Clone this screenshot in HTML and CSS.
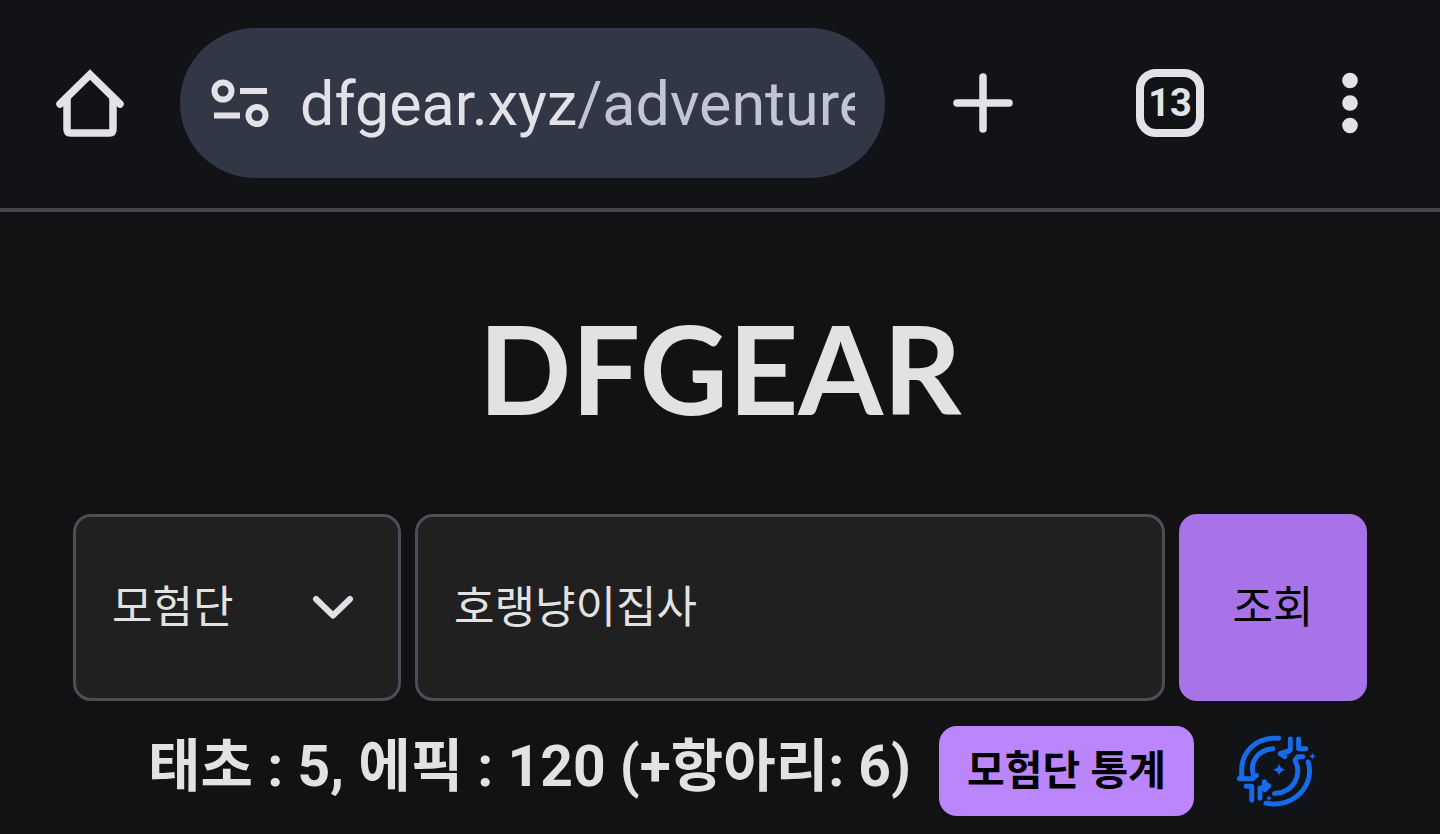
FILE: index.html
```
<!DOCTYPE html>
<html lang="ko">
<head>
    <meta charset="UTF-8">
    <title>DFGEAR</title>
    <meta name="viewport" content="width=device-width, initial-scale=1.0">
    <link rel="stylesheet" href="styles.css">
</head>
<body>
    <!-- Browser bar -->
    <header class="toolbar">
        <button class="tool-button" aria-label="Home">
            <svg width="72" height="72" viewBox="0 0 72 72" fill="none" stroke="currentColor" stroke-width="7.5" stroke-linecap="round" stroke-linejoin="round">
                <path d="M6 37 36 7.500 66 37" stroke-linejoin="miter"/>
                <path d="M13 31V62Q13 66 16.500 66H55.500Q59 66 59 62V31"/>
            </svg>
        </button>
        <div class="address-bar">
            <button class="site-info" aria-label="Site information">
                <svg width="60" height="52" viewBox="0 0 60 52" fill="none" stroke="currentColor" stroke-width="6">
                    <circle cx="13" cy="14" r="8.500"/>
                    <path d="M30 14H57M4 38.500H30"/>
                    <circle cx="47" cy="38.500" r="8.500"/>
                </svg>
            </button>
            <a class="url" href="#">dfgear.xyz<span class="url-path">/adventure</span></a>
        </div>
        <button class="tool-button" aria-label="New tab">
            <svg width="60" height="60" viewBox="0 0 60 60" fill="none" stroke="currentColor" stroke-width="7.5" stroke-linecap="round">
                <path d="M30 4V56M4 30H56"/>
            </svg>
        </button>
        <button class="tool-button" aria-label="Tabs">
            <span class="tab-count">13</span>
        </button>
        <button class="tool-button" aria-label="Menu">
            <svg width="16" height="62" viewBox="0 0 16 62" fill="currentColor">
                <circle cx="8" cy="8.500" r="7.800"/>
                <circle cx="8" cy="31" r="7.800"/>
                <circle cx="8" cy="53.500" r="7.800"/>
            </svg>
        </button>
    </header>

    <!-- Main Content -->
    <main>
        <h1 class="logo">DFGEAR</h1>

        <form class="search">
            <div class="select-box">
                <select class="field" aria-label="검색 유형">
                    <option>모험단</option>
                </select>
                <svg class="chevron" width="42" height="26" viewBox="0 0 42 26" fill="none" stroke="currentColor" stroke-width="6" stroke-linecap="round" stroke-linejoin="round">
                    <path d="M4 4 21 20.500 38 4"/>
                </svg>
            </div>
            <input class="field" type="text" value="호랭냥이집사" aria-label="모험단 이름">
            <button class="search-button" type="button">조회</button>
        </form>

        <section class="summary">
            <h2>태초 : 5, 에픽 : 120 (+항아리: 6)</h2>
            <button class="stats-button">모험단 통계</button>
            <button class="emblem" aria-label="갱신">
                <svg width="92" height="92" viewBox="33 30 279 279" fill="none" stroke="currentColor" stroke-width="15" stroke-linecap="round" stroke-linejoin="round">
                    <path d="M181 70C112 66 62 112 69 183L61 193H102L113 183"/>
                    <path d="M163 102C119 106 92 140 104 181"/>
                    <path d="M270 142C292 211 226 285 142 267"/>
                    <path d="M254 126H239L230 137C253 181 226 235 168 238"/>
                    <path d="M216 72V106L208 112M209 109 185 117 199 126M241 72V102H263"/>
                    <path d="M82 216H99V258M124 252V221H137V202L145 214 151 214 139 226"/>
                    <g fill="currentColor" stroke="none">
                        <path d="M182 147Q185 163 201 166Q185 169 182 184Q179 169 163 166Q179 163 182 147Z"/>
                        <path d="M283 115 286 122 293 125 286 128 283 135 280 128 273 125 280 122Z"/>
                        <path d="M151 243 154 249 160 252 154 255 151 261 148 255 142 252 148 249Z"/>
                    </g>
                </svg>
            </button>
        </section>
    </main>
</body>
</html>
```
FILE: styles.css
```
:root {
    --color-bg: #121214;
    --color-toolbar: #111317;
    --color-pill: #323745;
    --color-icon: #e3e2e8;
    --color-text: #e2e2e2;
    --color-field: #202020;
    --color-border: #4b4f55;
    --color-purple: #a873e8;
    --color-purple-light: #bb86fc;
    --radius-base: 18px;
}

* {
    box-sizing: border-box;
}

body {
    margin: 0;
    background: var(--color-bg);
    color: var(--color-text);
    font-family: Roboto, "Noto Sans CJK KR", sans-serif;
}

button {
    border: 0;
    padding: 0;
    background: none;
    color: inherit;
    font-family: inherit;
}

svg {
    display: block;
}

/* Browser bar */
.toolbar {
    display: grid;
    grid-template-columns: 180px 1fr 195px 180px 180px;
    align-items: center;
    padding: 28px 0 30px;
    background: var(--color-toolbar);
    border-bottom: 4px solid #43464d;
    color: var(--color-icon);
}

.tool-button {
    display: flex;
    align-items: center;
    justify-content: center;
    height: 150px;
}

.address-bar {
    display: flex;
    align-items: center;
    gap: 30px;
    min-width: 0;
    height: 150px;
    padding: 0 30px;
    border-radius: 75px;
    background: var(--color-pill);
}

.url {
    flex: 1;
    overflow: hidden;
    padding-top: 2px;
    color: inherit;
    font-size: 61px;
    line-height: 80px;
    text-decoration: none;
    white-space: nowrap;
}

.url-path {
    color: #c3c5d2;
}

.tab-count {
    display: flex;
    align-items: center;
    justify-content: center;
    width: 68px;
    height: 68px;
    border: 8px solid;
    border-radius: 20px;
    font-size: 38px;
    font-weight: 700;
}

/* Main Content */
main {
    padding: 76px 73px 16px;
}

.logo {
    margin: 0 0 66px;
    font-family: Lato, sans-serif;
    font-size: 122px;
    font-weight: 700;
    line-height: 160px;
    text-align: center;
}

.search {
    display: grid;
    grid-template-columns: 328px 1fr 188px;
    gap: 14px;
    height: 187px;
}

.select-box {
    position: relative;
}

.field {
    width: 100%;
    height: 100%;
    padding: 0 36px;
    border: 3px solid var(--color-border);
    border-radius: var(--radius-base);
    background: var(--color-field);
    color: var(--color-text);
    font-family: inherit;
    font-size: 44px;
    appearance: none;
}

input.field {
    padding-bottom: 8px;
}

.chevron {
    position: absolute;
    top: 50%;
    right: 47px;
    transform: translateY(-50%);
    color: #e0e1e6;
    pointer-events: none;
}

.search-button {
    padding-bottom: 8px;
    border-radius: var(--radius-base);
    background: var(--color-purple);
    color: #000;
    font-size: 44px;
}

.summary {
    display: flex;
    align-items: center;
    justify-content: center;
    margin: 24px 0 0 30px;
}

.summary h2 {
    margin: 0 28px 8px 0;
    font-size: 57px;
    line-height: 80px;
    white-space: nowrap;
}

.stats-button {
    height: 90px;
    padding: 0 28px 8px;
    border-radius: var(--radius-base);
    background: var(--color-purple-light);
    color: #000;
    font-size: 41px;
    font-weight: 700;
    white-space: nowrap;
}

.emblem {
    margin-left: 36px;
    background: #101419;
    color: #176be8;
}
```
